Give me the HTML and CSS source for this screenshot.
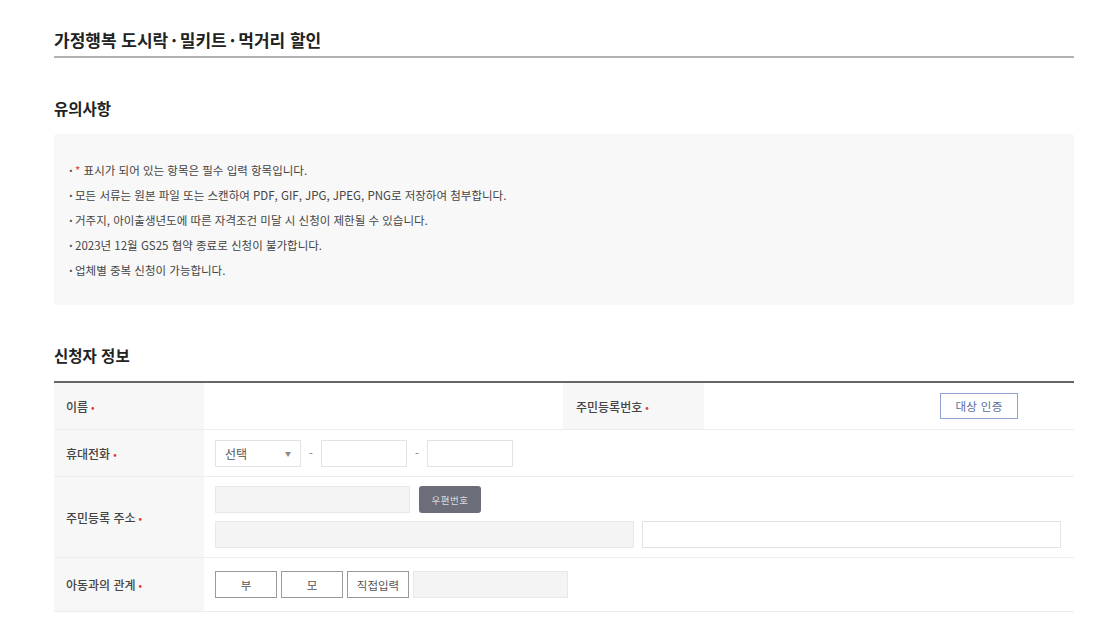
FILE: index.html
```html
<!DOCTYPE html>
<html lang="ko">
<head>
<meta charset="utf-8">
<title>가정행복 도시락·밀키트·먹거리 할인</title>
<link rel="stylesheet" href="styles.css">
</head>
<body>
<div class="page">
  <h1 class="page-title">가정행복 도시락<span class="mid">·</span>밀키트<span class="mid">·</span>먹거리 할인</h1>

  <h2 class="section-title">유의사항</h2>
  <ul class="notice">
    <li><span class="req-star">*</span> 표시가 되어 있는 항목은 필수 입력 항목입니다.</li>
    <li>모든 서류는 원본 파일 또는 스캔하여 PDF, GIF, JPG, JPEG, PNG로 저장하여 첨부합니다.</li>
    <li>거주지, 아이출생년도에 따른 자격조건 미달 시 신청이 제한될 수 있습니다.</li>
    <li>2023년 12월 GS25 협약 종료로 신청이 불가합니다.</li>
    <li>업체별 중복 신청이 가능합니다.</li>
  </ul>

  <h2 class="section-title">신청자 정보</h2>
  <div class="form-table">
    <div class="row row-name">
      <div class="label">이름<span class="req">•</span></div>
      <div class="value"></div>
      <div class="label label-2">주민등록번호<span class="req">•</span></div>
      <div class="value value-right"><button class="btn-verify">대상 인증</button></div>
    </div>
    <div class="row row-phone">
      <div class="label">휴대전화<span class="req">•</span></div>
      <div class="value full">
        <div class="select">선택<span class="caret">▼</span></div>
        <span class="dash">-</span>
        <div class="input w86"></div>
        <span class="dash">-</span>
        <div class="input w86"></div>
      </div>
    </div>
    <div class="row row-addr">
      <div class="label">주민등록 주소<span class="req">•</span></div>
      <div class="value full addr">
        <div class="addr-line">
          <div class="input gray w195"></div>
          <button class="btn-zip">우편번호</button>
        </div>
        <div class="addr-line gap8">
          <div class="input gray w419"></div>
          <div class="input w419"></div>
        </div>
      </div>
    </div>
    <div class="row row-rel">
      <div class="label">아동과의 관계<span class="req">•</span></div>
      <div class="value full rel">
        <button class="btn-opt">부</button>
        <button class="btn-opt">모</button>
        <button class="btn-opt">직접입력</button>
        <div class="input gray w155"></div>
      </div>
    </div>
  </div>
</div>
</body>
</html>
```

FILE: styles.css
```css
* { box-sizing: border-box; }
html, body { margin: 0; padding: 0; background: #fff; }
body {
  font-family: "Noto Sans CJK KR", "Noto Sans", sans-serif;
  color: #333;
}
.page {
  width: 1020px;
  margin-left: 54px;
  padding-top: 28px;
}
.page-title {
  margin: 0;
  font-size: 17px;
  font-weight: 700;
  line-height: 24px;
  color: #222;
  padding-bottom: 4px;
  border-bottom: 2px solid #b3b3b3;
}
.page-title .mid { margin: 0 3px; }
.section-title {
  margin: 40px 0 16px;
  font-size: 15.5px;
  font-weight: 700;
  line-height: 20px;
  color: #222;
}
.notice {
  list-style: none;
  margin: 0;
  padding: 24px 16px 22px;
  background: #f8f8f8;
  border-radius: 3px;
}
.notice li {
  font-size: 11.5px;
  line-height: 25px;
  color: #444;
  padding-left: 5px;
  position: relative;
}
.notice li::before {
  content: "·";
  position: absolute;
  left: -1px;
  top: 0;
  color: #555;
  font-weight: 700;
}
.req-star { color: #e53935; }

.form-table {
  border-top: 2px solid #666;
}
.row {
  display: flex;
  border-bottom: 1px solid #ededed;
}
.row-name { height: 47px; }
.row-phone { height: 47px; }
.row-addr { height: 81px; }
.row-rel { height: 54px; }
.label {
  width: 150px;
  flex: none;
  background: #f7f7f7;
  display: flex;
  align-items: center;
  padding-left: 12px;
  font-size: 12px;
  color: #444;
  font-weight: 500;
}
.label-2 { width: 141px; padding-left: 13px; }
.req { color: #e53935; font-size: 10px; margin-left: 3px; }
.value {
  display: flex;
  align-items: center;
  padding-left: 11px;
}
.row-name .value:nth-child(2) { width: 359px; }
.value.full { flex: 1; }
.value-right { flex: 1; padding-left: 236px; align-items: flex-start; padding-top: 10px; }
.btn-verify {
  width: 78px;
  height: 26px;
  background: #fff;
  border: 1px solid #90a2d4;
  color: #5b6b9e;
  font-family: inherit;
  font-size: 11.5px;
  letter-spacing: 0.3px;
  padding: 0;
}
.select, .input {
  height: 27px;
  border: 1px solid #e3e3e3;
  background: #fff;
}
.select {
  width: 86px;
  display: flex;
  align-items: center;
  justify-content: space-between;
  padding: 0 9px 0 9px;
  font-size: 12px;
  color: #555;
}
.caret { font-size: 6px; color: #888; }
.dash {
  width: 20px;
  text-align: center;
  font-size: 11px;
  color: #777;
}
.w86 { width: 86px; }
.w195 { width: 195px; }
.w419 { width: 419px; }
.w155 { width: 155px; }
.input.gray { background: #f4f4f4; border-color: #e8e8e8; }
.addr {
  flex-direction: column;
  align-items: flex-start;
  justify-content: center;
  gap: 8px;
}
.addr-line { display: flex; gap: 9px; }
.addr-line.gap8 { gap: 8px; }
.btn-zip {
  width: 62px;
  height: 27px;
  background: #6b6d78;
  border: none;
  border-radius: 3px;
  color: #d9dae0;
  font-family: inherit;
  font-size: 9.5px;
  letter-spacing: 0.5px;
  padding: 0;
}
.rel { gap: 4px; }
.btn-opt {
  width: 62px;
  height: 27px;
  background: #fff;
  border: 1px solid #9a9a9a;
  color: #555;
  font-family: inherit;
  font-size: 11.5px;
  padding: 0;
}
```
